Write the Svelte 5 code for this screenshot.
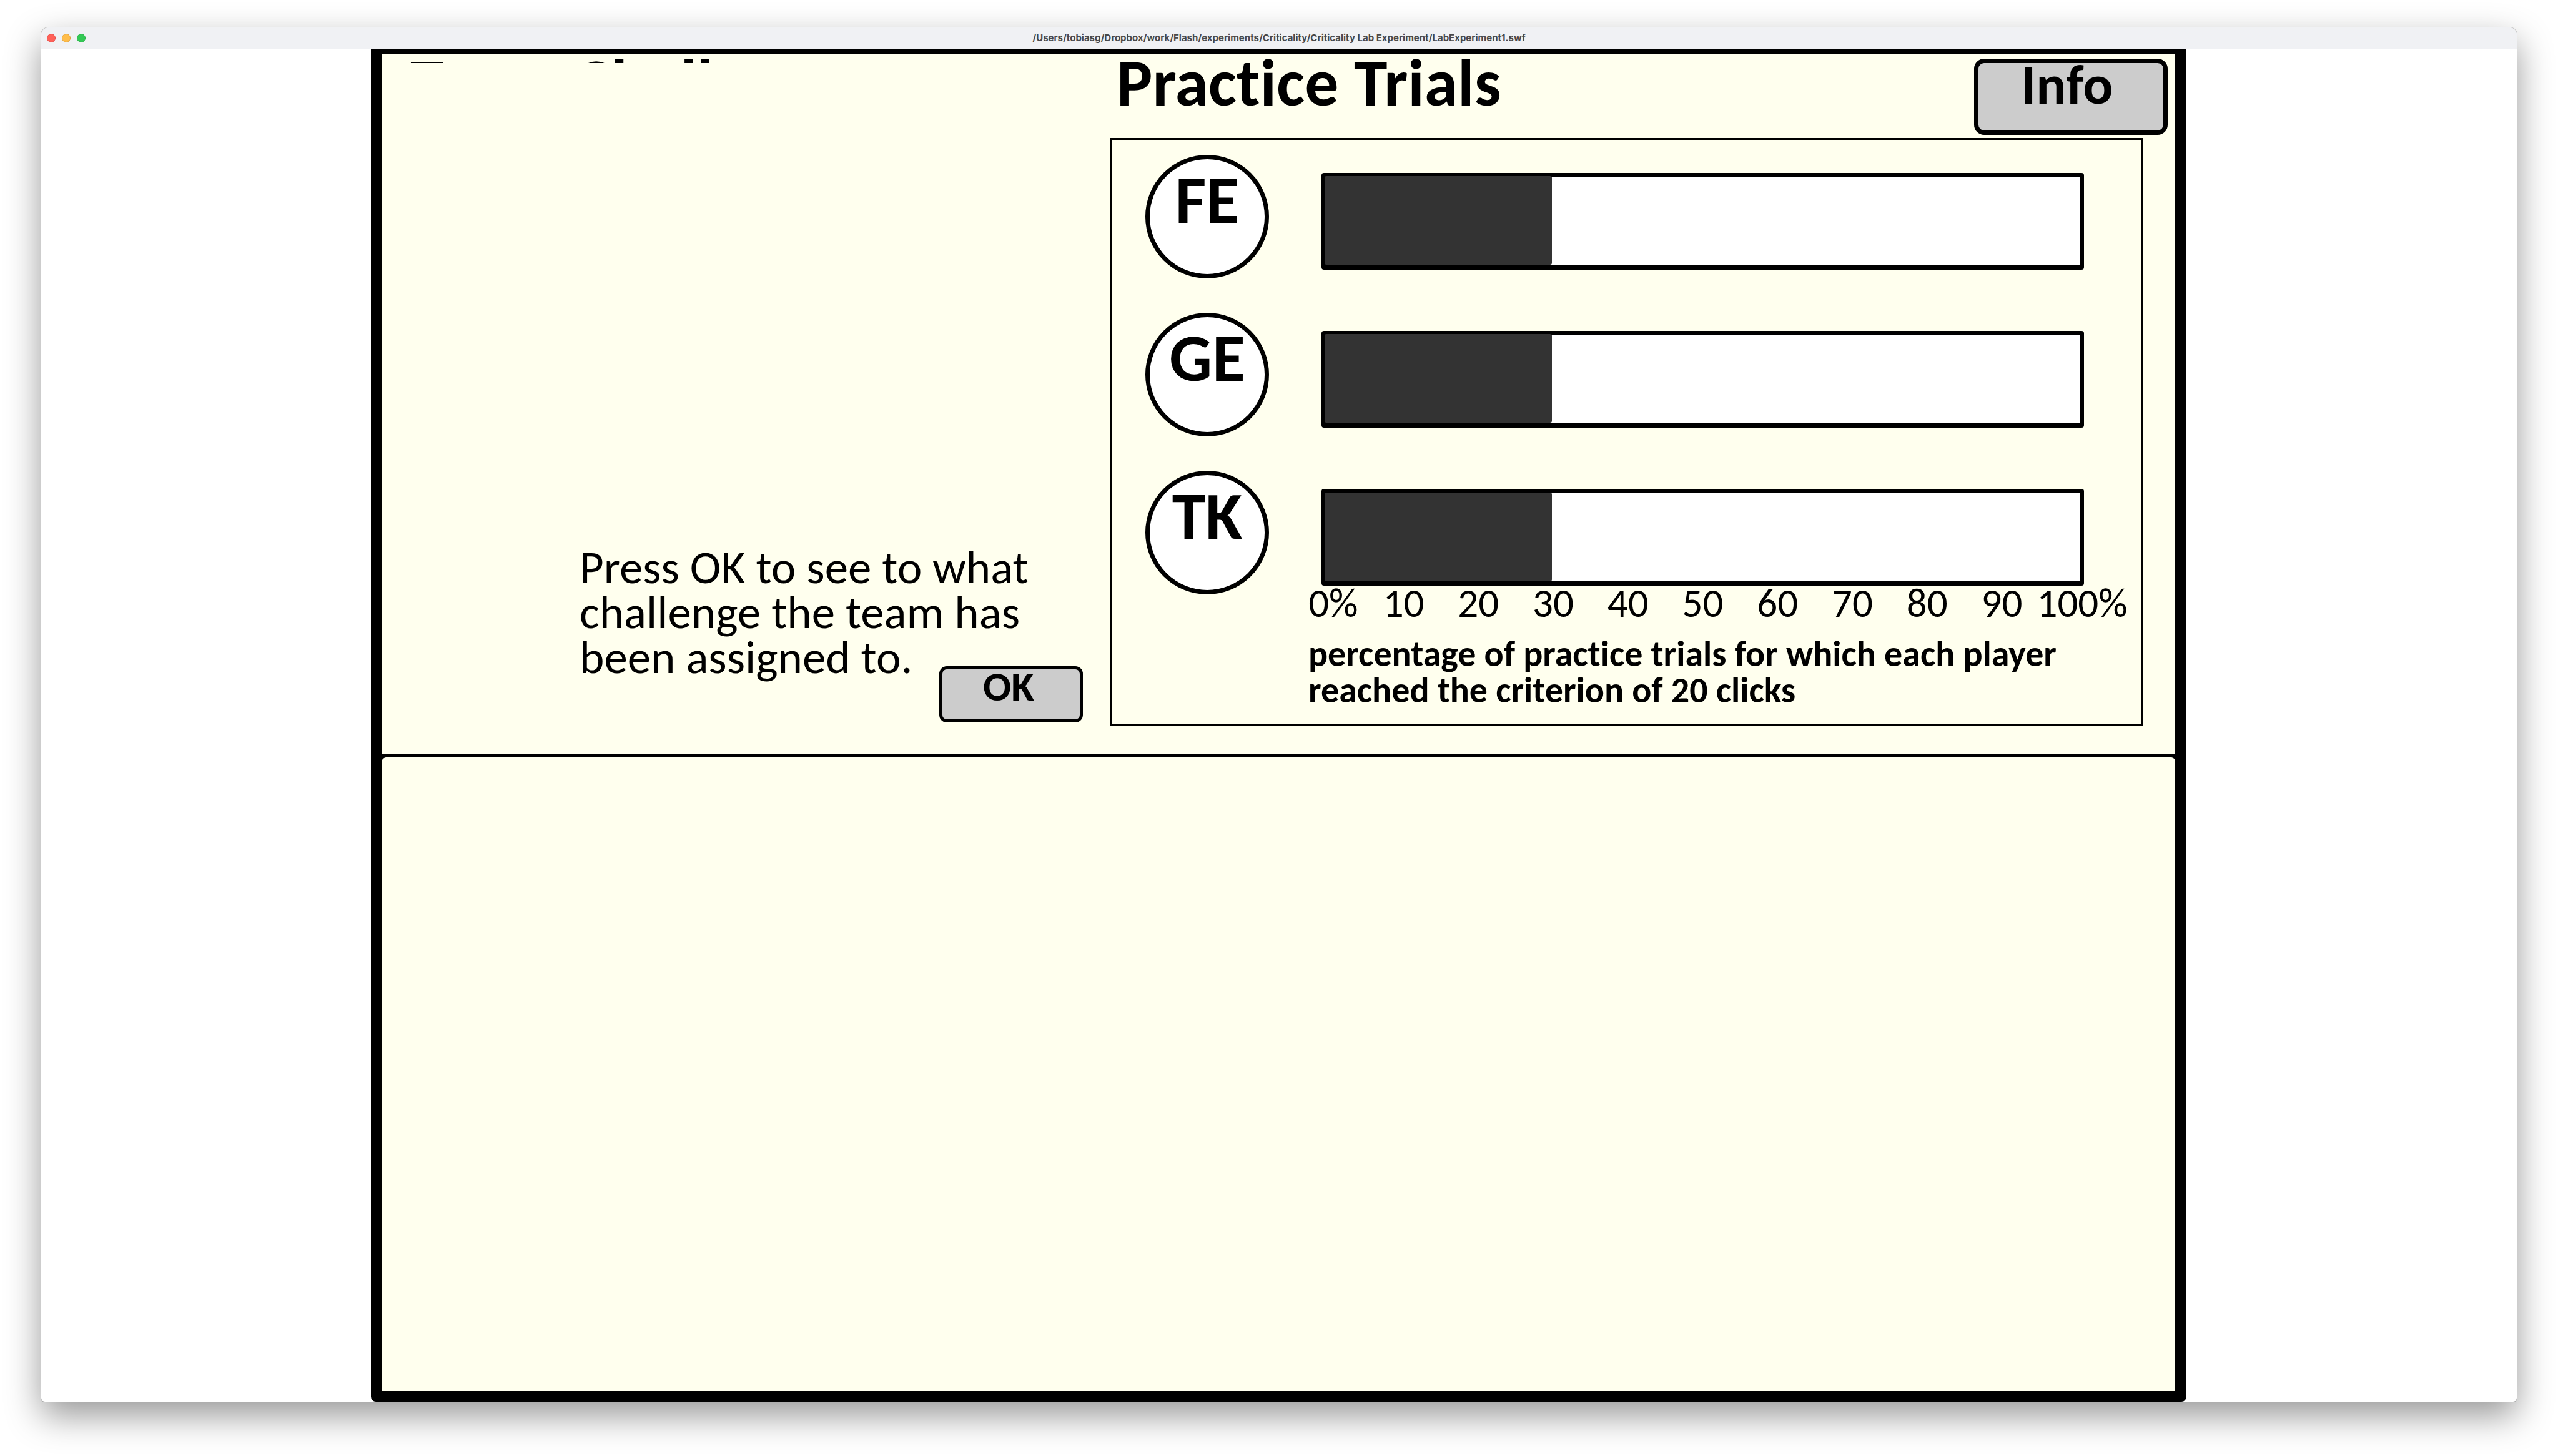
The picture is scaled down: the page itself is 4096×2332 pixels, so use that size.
<script>
  const path =
    '/Users/tobiasg/Dropbox/work/Flash/experiments/Criticality/Criticality Lab Experiment/LabExperiment1.swf';
  const players = [
    { name: 'FE', score: 30 },
    { name: 'GE', score: 30 },
    { name: 'TK', score: 30 }
  ];
  const ticks = ['0%', '10', '20', '30', '40', '50', '60', '70', '80', '90', '100%'];
</script>

<div class="desktop">
  <div class="window">
    <header class="titlebar">
      <div class="lights">
        <button class="light close" aria-label="Close"></button>
        <button class="light minimise" aria-label="Minimise"></button>
        <button class="light zoom" aria-label="Zoom"></button>
      </div>
      <span class="path">{path}</span>
    </header>

    <main class="stage">
      <section class="upper">
        <div class="challenge">
          <h2 class="heading clipped">Team Challenge</h2>
          <div class="prompt">
            <p>Press OK to see to what<br />challenge the team has<br />been assigned to.</p>
            <button class="key ok">OK</button>
          </div>
        </div>

        <div class="results">
          <div class="top">
            <h2 class="heading">Practice Trials</h2>
            <button class="key info">Info</button>
          </div>
          <div class="panel">
            <div class="players">
              {#each players as player}
                <div class="player">{player.name}</div>
              {/each}
            </div>
            <div class="chart">
              <div class="bars">
                {#each players as player}
                  <div class="bar" role="img" aria-label="{player.name}: {player.score}%">
                    <div class="fill" style="width: {player.score}%"></div>
                  </div>
                {/each}
              </div>
              <div class="axis">
                {#each ticks as tick}
                  <span>{tick}</span>
                {/each}
              </div>
              <p class="caption">
                percentage of practice trials for which each player<br />reached the criterion of 20
                clicks
              </p>
            </div>
          </div>
        </div>
      </section>
      <section class="lower"></section>
    </main>
  </div>
</div>

<style>
  :global(body) {
    margin: 0;
    background: #fff;
  }

  .desktop {
    box-sizing: border-box;
    min-height: 100vh;
    padding: 44px 66px 87px;
    display: flex;
    font-family: Carlito, Calibri, Lato, 'Open Sans', sans-serif;
    font-variant-ligatures: none;
    color: #000;
  }

  h2,
  p {
    margin: 0;
  }

  button {
    padding: 0;
    font-family: inherit;
    font-variant-ligatures: inherit;
    color: inherit;
  }

  .window {
    flex: 1;
    display: flex;
    flex-direction: column;
    background: #fff;
    border-radius: 12px 12px 6px 6px;
    box-shadow:
      0 0 0 1px rgba(0, 0, 0, 0.2),
      0 22px 56px rgba(0, 0, 0, 0.41);
  }

  .titlebar {
    box-sizing: border-box;
    height: 35px;
    padding: 0 9px;
    display: grid;
    grid-template-columns: 1fr auto 1fr;
    align-items: center;
    background: #f0f1f4;
    border-bottom: 1px solid #d5d7da;
    border-radius: 12px 12px 0 0;
  }

  .lights {
    display: flex;
    gap: 10px;
  }

  .light {
    box-sizing: border-box;
    width: 14px;
    height: 14px;
    border: 1px solid;
    border-radius: 50%;
  }

  .close {
    background: #ff6159;
    border-color: #e64a45;
  }

  .minimise {
    background: #ffbd4a;
    border-color: #dfa03a;
  }

  .zoom {
    background: #33c955;
    border-color: #25b043;
  }

  .path {
    font: 700 15px/20px Inter, sans-serif;
    color: #48484a;
  }

  .stage {
    flex: 1;
    margin: -1px 529px 0 528px;
    padding: 9px 18px 17px;
    display: flex;
    flex-direction: column;
    background: #000;
    border-radius: 0 0 8px 8px;
  }

  .upper {
    display: grid;
    grid-template-columns: 1166fr 1705fr;
    background: #ffffee;
    border-bottom: 5px solid #000;
  }

  .lower {
    flex: 1;
    background: #ffffee;
    border-radius: 12px 12px 0 0 / 6px 6px 0 0;
  }

  .heading {
    font-size: 108px;
    font-weight: 700;
    line-height: 90px;
  }

  .challenge {
    display: flex;
    flex-direction: column;
    justify-content: space-between;
    padding: 0 44px 50px 45px;
  }

  .clipped {
    height: 14px;
    overflow: hidden;
  }

  .prompt {
    display: flex;
    flex-direction: column;
    padding-left: 271px;
    font-size: 75px;
    line-height: 72px;
  }

  .key {
    display: flex;
    justify-content: center;
    align-items: flex-start;
    box-sizing: border-box;
    background: #ccc;
    border: 5px solid #000;
    border-radius: 12px;
    font-weight: 700;
  }

  .ok {
    align-self: flex-end;
    width: 230px;
    height: 90px;
    margin-top: -22px;
    padding-right: 8px;
    font-size: 67px;
    line-height: 54px;
  }

  .results {
    padding: 0 51px 45px 0;
  }

  .top {
    display: flex;
    justify-content: space-between;
    height: 134px;
    padding-left: 10px;
    margin-right: -39px;
  }

  .info {
    width: 310px;
    height: 122px;
    margin-top: 7px;
    padding-right: 12px;
    border-width: 7px;
    border-radius: 16px;
    font-size: 90px;
    line-height: 68px;
  }

  .panel {
    display: flex;
    gap: 84px;
    padding: 24px 92px 24px 53px;
    border: 3px solid #000;
  }

  .players {
    display: flex;
    flex-direction: column;
    gap: 55px;
  }

  .player {
    box-sizing: border-box;
    width: 198px;
    height: 198px;
    border: 7px solid #000;
    border-radius: 50%;
    background: #fff;
    font-size: 108px;
    font-weight: 700;
    line-height: 130px;
    text-align: center;
  }

  .chart {
    flex: 1;
    padding-top: 29px;
  }

  .bars {
    display: flex;
    flex-direction: column;
    gap: 98px;
  }

  .bar {
    box-sizing: border-box;
    height: 155px;
    border: 7px solid #000;
    border-radius: 4px;
    background: #fff;
  }

  .fill {
    height: 142px;
    margin: -2px 0 0 -2px;
    padding-right: 2px;
    background: #333;
    border-radius: 3px;
  }

  .bar:last-child .fill {
    margin-top: -1px;
  }

  .axis {
    display: grid;
    grid-template-columns: repeat(11, minmax(0, 1fr));
    justify-items: center;
    margin: 0 -48px;
    font-size: 65px;
    line-height: 56px;
  }

  .axis span:first-child {
    padding-left: 14px;
  }

  .axis span:last-child {
    padding-left: 18px;
  }

  .caption {
    margin: 25px -80px 0 -21px;
    font-size: 58px;
    font-weight: 700;
    line-height: 58px;
    white-space: nowrap;
  }
</style>
